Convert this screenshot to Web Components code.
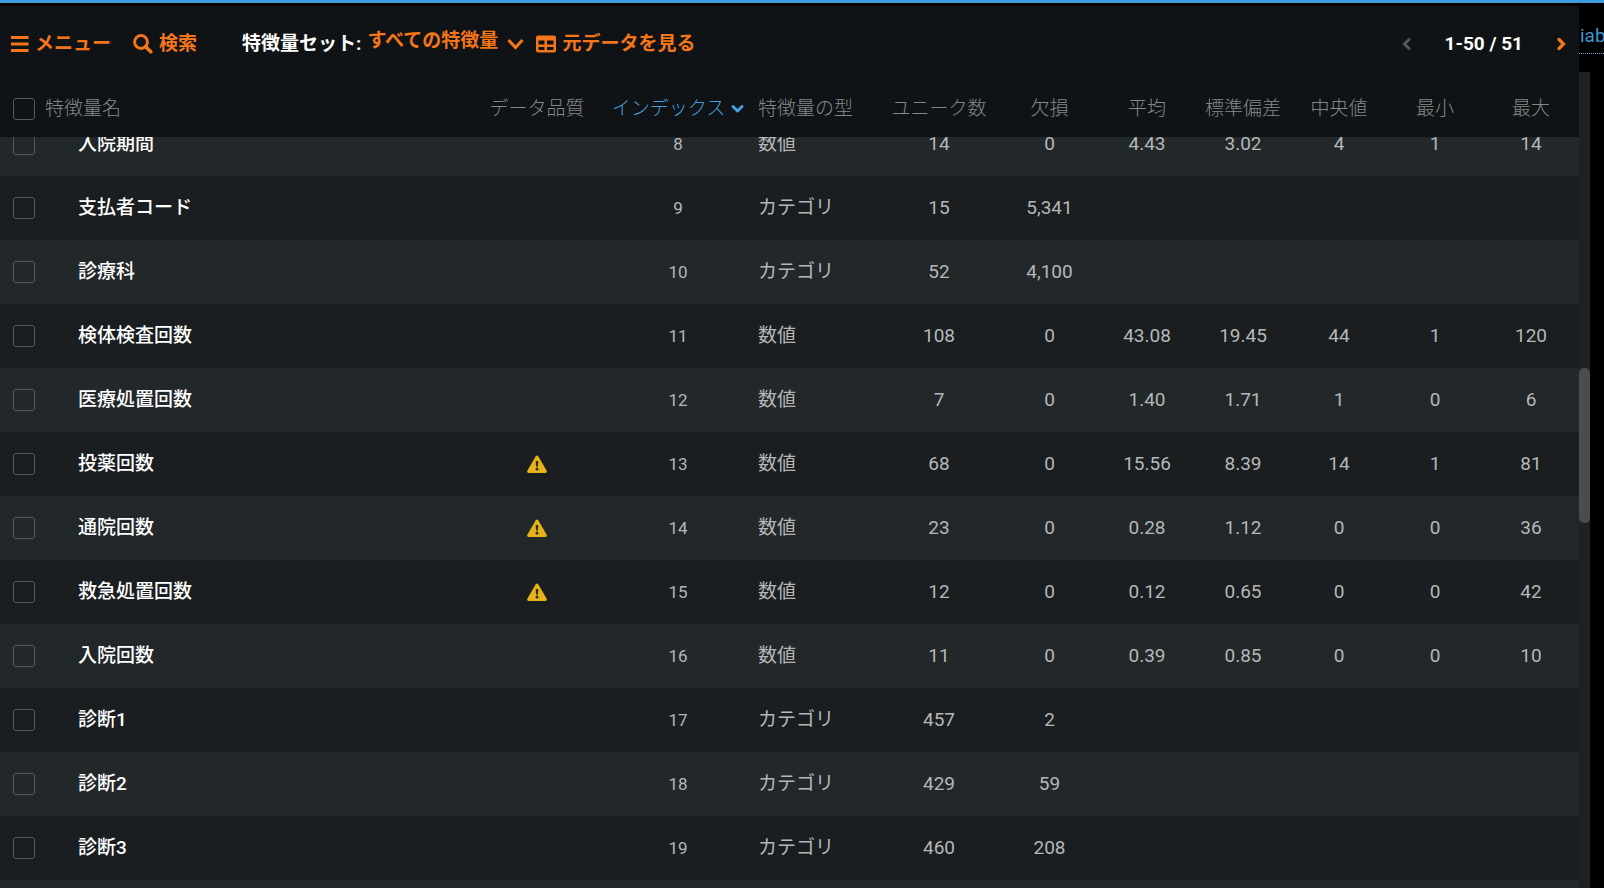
<!DOCTYPE html>
<html lang="ja">
<head>
<meta charset="utf-8">
<title>特徴量</title>
<style>
  body {
    margin: 0;
    background: #000;
    color: #b4b7b8;
    font: 19px/24px Roboto, "Noto Sans CJK JP", sans-serif;
  }
</style>
</head>
<body>
<feature-page>
  <feature-toolbar slot="toolbar"></feature-toolbar>
  <feature-table slot="table"></feature-table>
  <a slot="link" href="#variables">iab</a>
  <scroll-track slot="scroll"></scroll-track>
</feature-page>

<script>
const icons = {
  menu: [18, 16, '<path d="M0 1.500h17.500M0 8h17.500M0 14.500h17.500" fill="none" stroke="currentColor" stroke-width="2.800"/>'],
  search: [20, 20, '<circle cx="8" cy="8" r="6.400" fill="none" stroke="currentColor" stroke-width="3"/><path d="M12.500 12.500l5.300 5.300" stroke="currentColor" stroke-width="3.600" stroke-linecap="round"/>'],
  down: [17, 12, '<path d="M1.500 2l7 7.500 7-7.500" fill="none" stroke="currentColor" stroke-width="3"/>'],
  sort: [13, 10, '<path d="M2 2.500l4.500 4.500L11 2.500" fill="none" stroke="currentColor" stroke-width="3" stroke-linecap="round" stroke-linejoin="round"/>'],
  grid: [20, 18, '<path fill-rule="evenodd" fill="currentColor" d="M2 0.500h16a2 2 0 0 1 2 2v13a2 2 0 0 1-2 2H2a2 2 0 0 1-2-2v-13a2 2 0 0 1 2-2zM2.500 5.500v4h6v-4zM11 5.500v4h6.500v-4zM2.500 12v3h6v-3zM11 12v3h6.500v-3z"/>'],
  prev: [9, 14, '<path d="M7 2.500L2.500 7 7 11.500" fill="none" stroke="currentColor" stroke-width="3" stroke-linecap="round"/>'],
  next: [9, 14, '<path d="M2 2.500L6.500 7 2 11.500" fill="none" stroke="currentColor" stroke-width="3.200" stroke-linecap="round"/>'],
  warning: [20, 18, '<path d="M8.700 1.200a1.500 1.500 0 0 1 2.600 0l8.400 14.500a1.500 1.500 0 0 1-1.300 2.200H1.600a1.500 1.500 0 0 1-1.300-2.200z" fill="#e3b21c"/><path d="M8.700 6h2.600l-.3 5.400H9z" fill="#332b12"/><circle cx="10" cy="14" r="1.500" fill="#332b12"/>']
};

/**
 * @class UiIcon
 */
class UiIcon extends HTMLElement {
  connectedCallback () {
    const [width, height, shape] = icons[this.getAttribute('name')];
    this.attachShadow({ mode: 'open' }).innerHTML = `
      <style>
        :host { display: inline-flex; flex: none; }
      </style>
      <svg width="${width}" height="${height}" viewBox="0 0 ${width} ${height}" aria-hidden="true">${shape}</svg>
    `;
  }
}
customElements.define('ui-icon', UiIcon);

/**
 * @class FeaturePage
 */
class FeaturePage extends HTMLElement {
  constructor () {
    super();
    this.attachShadow({ mode: 'open' }).innerHTML = `
      <style>
        :host {
          display: grid;
          grid-template-columns: minmax(0, 1fr) 25px;
          box-sizing: border-box;
          height: 100vh;
          padding-top: 3px;
          border-top: 3px solid #3f9bdf;
          overflow: hidden;
        }
        main, aside {
          display: flex;
          flex-direction: column;
          min-height: 0;
        }
        main {
          background: #1a1e20;
        }
        header {
          box-sizing: border-box;
          height: 66px;
          padding-top: 18px;
          overflow: hidden;
        }
        ::slotted(a) {
          display: block;
          height: 29px;
          padding-left: 1px;
          border-bottom: 1px dotted #6ba4d0;
          color: #3f93cf;
          text-decoration: none;
        }
      </style>
      <main>
        <slot name="toolbar"></slot>
        <slot name="table"></slot>
      </main>
      <aside>
        <header><slot name="link"></slot></header>
        <slot name="scroll"></slot>
      </aside>
    `;
  }
}
customElements.define('feature-page', FeaturePage);

/**
 * @class FeatureToolbar
 */
class FeatureToolbar extends HTMLElement {
  constructor () {
    super();
    this.attachShadow({ mode: 'open' }).innerHTML = `
      <style>
        :host {
          display: flex;
          flex: none;
          align-items: center;
          justify-content: space-between;
          height: 75px;
          padding: 0 13px 0 11px;
          background: #101315;
          color: #f4751a;
          font-weight: 700;
        }
        div, button, .set {
          display: flex;
          align-items: center;
        }
        button, select {
          margin: 0;
          padding: 0;
          border: 0;
          background: none;
          color: inherit;
          font: inherit;
          cursor: pointer;
        }
        button {
          gap: 6px;
        }
        .actions {
          gap: 22px;
        }
        .filters {
          gap: 12px;
          margin-left: 23px;
        }
        .set {
          gap: 6px;
        }
        label, output {
          color: #fff;
        }
        select {
          appearance: none;
          padding-bottom: 6px;
        }
        .pager {
          gap: 34px;
        }
        button:disabled {
          color: #54585a;
        }
      </style>
      <div class="actions">
        <button type="button"><ui-icon name="menu"></ui-icon>メニュー</button>
        <button type="button"><ui-icon name="search"></ui-icon>検索</button>
        <div class="filters">
          <div class="set">
            <label for="feature-set">特徴量セット:</label>
            <select id="feature-set"><option>すべての特徴量</option></select>
            <ui-icon name="down"></ui-icon>
          </div>
          <button type="button"><ui-icon name="grid"></ui-icon>元データを見る</button>
        </div>
      </div>
      <div class="pager">
        <button type="button" aria-label="前へ" disabled><ui-icon name="prev"></ui-icon></button>
        <output>1-50 / 51</output>
        <button type="button" aria-label="次へ"><ui-icon name="next"></ui-icon></button>
      </div>
    `;
  }
}
customElements.define('feature-toolbar', FeatureToolbar);

// name, warning, index, type, unique, missing, mean, sd, median, min, max
const features = [
  ['入院期間', false, 8, '数値', '14', '0', '4.43', '3.02', '4', '1', '14'],
  ['支払者コード', false, 9, 'カテゴリ', '15', '5,341'],
  ['診療科', false, 10, 'カテゴリ', '52', '4,100'],
  ['検体検査回数', false, 11, '数値', '108', '0', '43.08', '19.45', '44', '1', '120'],
  ['医療処置回数', false, 12, '数値', '7', '0', '1.40', '1.71', '1', '0', '6'],
  ['投薬回数', true, 13, '数値', '68', '0', '15.56', '8.39', '14', '1', '81'],
  ['通院回数', true, 14, '数値', '23', '0', '0.28', '1.12', '0', '0', '36'],
  ['救急処置回数', true, 15, '数値', '12', '0', '0.12', '0.65', '0', '0', '42'],
  ['入院回数', false, 16, '数値', '11', '0', '0.39', '0.85', '0', '0', '10'],
  ['診断1', false, 17, 'カテゴリ', '457', '2'],
  ['診断2', false, 18, 'カテゴリ', '429', '59'],
  ['診断3', false, 19, 'カテゴリ', '460', '208'],
  ['', false, '', '', '', '']
];

/**
 * @class FeatureTable
 */
class FeatureTable extends HTMLElement {
  constructor () {
    super();
    this.attachShadow({ mode: 'open' }).innerHTML = `
      <style>
        :host {
          display: block;
          flex: 1;
          min-height: 0;
          overflow: hidden;
        }
        table {
          width: 100%;
          table-layout: fixed;
          border-collapse: separate;
          border-spacing: 0;
        }
        .quality, .unique { width: 122px; }
        .index { width: 160px; }
        .type { width: 120px; }
        .missing { width: 99px; }
        .stat { width: 96px; }
        th, td {
          padding: 0;
          text-align: center;
          white-space: nowrap;
        }
        th {
          position: sticky;
          top: 0;
          z-index: 1;
          height: 56px;
          background: #101315;
          color: #84888a;
          font-weight: 300;
        }
        td {
          height: 64px;
        }
        tbody tr:nth-child(odd) {
          background: #22272a;
        }
        th:first-child, td:first-child, th:nth-child(4), td:nth-child(4) {
          text-align: left;
        }
        td:nth-child(3) {
          font-size: 17px;
        }
        td ui-icon {
          display: flex;
          justify-content: center;
        }
        label {
          display: flex;
          align-items: center;
          gap: 10px;
          padding-left: 13px;
        }
        td label {
          gap: 43px;
          color: #fff;
          font-weight: 500;
        }
        input {
          appearance: none;
          box-sizing: border-box;
          width: 22px;
          height: 22px;
          margin: 0;
          border: 1px solid #55595b;
          border-radius: 3px;
        }
        button {
          display: inline-flex;
          align-items: center;
          gap: 6px;
          padding: 0;
          border: 0;
          background: none;
          color: #459fdc;
          font: inherit;
        }
      </style>
      <table>
        <colgroup>
          <col>
          <col class="quality">
          <col class="index">
          <col class="type">
          <col class="unique">
          <col class="missing">
          <col class="stat" span="5">
        </colgroup>
        <thead>
          <tr>
            <th><label><input type="checkbox">特徴量名</label></th>
            <th>データ品質</th>
            <th><button type="button">インデックス<ui-icon name="sort"></ui-icon></button></th>
            <th>特徴量の型</th>
            <th>ユニーク数</th>
            <th>欠損</th>
            <th>平均</th>
            <th>標準偏差</th>
            <th>中央値</th>
            <th>最小</th>
            <th>最大</th>
          </tr>
        </thead>
        <tbody></tbody>
      </table>
    `;
    this.$body = this.shadowRoot.querySelector('tbody');
  }

  /**
   * @function connectedCallback
   * @returns {void}
   */
  connectedCallback () {
    this.$body.innerHTML = features.map(([name, warning, ...values]) => {
      const cells = Array.from({ length: 9 }, (_, i) => `<td>${values[i] ?? ''}</td>`);
      return `
        <tr>
          <td><label><input type="checkbox">${name}</label></td>
          <td>${warning ? '<ui-icon name="warning"></ui-icon>' : ''}</td>
          ${cells.join('')}
        </tr>`;
    }).join('');
    // keep the list scrolled part way into its first row
    this.scrollTop = 25;
  }
}
customElements.define('feature-table', FeatureTable);

/**
 * @class ScrollTrack
 */
class ScrollTrack extends HTMLElement {
  constructor () {
    super();
    this.attachShadow({ mode: 'open' }).innerHTML = `
      <style>
        :host {
          display: grid;
          grid-template-rows: 296fr 155fr 365fr;
          flex: 1;
          width: 11px;
          background: #1e2224;
        }
        div {
          grid-row: 2;
          border-radius: 5px;
          background: #4a4d4e;
        }
      </style>
      <div></div>
    `;
  }
}
customElements.define('scroll-track', ScrollTrack);
</script>
</body>
</html>
